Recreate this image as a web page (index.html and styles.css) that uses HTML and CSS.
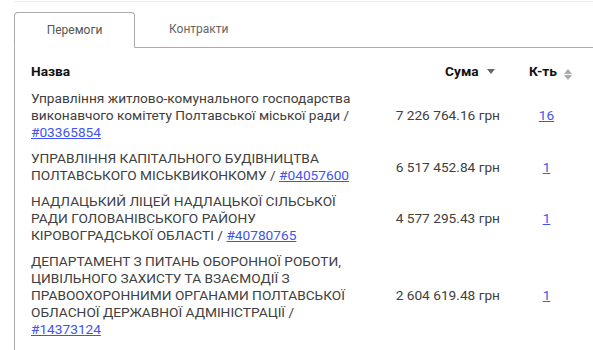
FILE: index.html
```html
<!DOCTYPE html>
<html lang="uk">
<head>
<meta charset="utf-8">
<link rel="stylesheet" href="styles.css">
</head>
<body>
<div class="top-line"></div>
<div class="tabs">
  <div class="tab active">Перемоги</div>
  <div class="tab">Контракти</div>
</div>
<div class="panel">
  <table class="grid">
    <colgroup>
      <col class="c-name"><col class="c-sum"><col class="c-cnt">
    </colgroup>
    <thead>
      <tr>
        <th class="h-name">Назва</th>
        <th class="h-sum">Сума <span class="arrow-down"></span></th>
        <th class="h-cnt">К-ть <span class="arrow-both"><span class="up"></span><span class="down"></span></span></th>
      </tr>
    </thead>
    <tbody>
      <tr>
        <td class="name">Управління житлово-комунального господарства виконавчого комітету Полтавської міської ради / <a href="#">#03365854</a></td>
        <td class="sum">7 226 764.16 грн</td>
        <td class="cnt"><a href="#">16</a></td>
      </tr>
      <tr>
        <td class="name">УПРАВЛІННЯ КАПІТАЛЬНОГО БУДІВНИЦТВА ПОЛТАВСЬКОГО МІСЬКВИКОНКОМУ / <a href="#">#04057600</a></td>
        <td class="sum">6 517 452.84 грн</td>
        <td class="cnt"><a href="#">1</a></td>
      </tr>
      <tr>
        <td class="name">НАДЛАЦЬКИЙ ЛІЦЕЙ НАДЛАЦЬКОЇ СІЛЬСЬКОЇ РАДИ ГОЛОВАНІВСЬКОГО РАЙОНУ КІРОВОГРАДСЬКОЇ ОБЛАСТІ / <a href="#">#40780765</a></td>
        <td class="sum">4 577 295.43 грн</td>
        <td class="cnt"><a href="#">1</a></td>
      </tr>
      <tr>
        <td class="name">ДЕПАРТАМЕНТ З ПИТАНЬ ОБОРОННОЇ РОБОТИ, ЦИВІЛЬНОГО ЗАХИСТУ ТА ВЗАЄМОДІЇ З ПРАВООХОРОННИМИ ОРГАНАМИ ПОЛТАВСЬКОЇ ОБЛАСНОЇ ДЕРЖАВНОЇ АДМІНІСТРАЦІЇ / <a href="#">#14373124</a></td>
        <td class="sum">2 604 619.48 грн</td>
        <td class="cnt"><a href="#">1</a></td>
      </tr>
    </tbody>
  </table>
</div>
</body>
</html>
```

FILE: styles.css
```css
html, body {
  margin: 0;
  padding: 0;
  background: #fff;
  font-family: Roboto, "Noto Sans", sans-serif;
  color: #404040;
}

.top-line {
  margin: 1px 0 0 14px;
  border-top: 1px solid #ececec;
}

.tabs {
  display: flex;
  margin: 10px 0 0 14px;
  border-bottom: 1px solid #ababab;
}

.tab {
  height: 34px;
  line-height: 34px;
  padding: 0 34px;
  font-size: 12px;
  color: #666;
  box-sizing: border-box;
}

.tab.active {
  width: 121px;
  height: 36px;
  padding: 0;
  text-align: center;
  color: #555;
  border: 1px solid #ababab;
  border-bottom: 1px solid #fff;
  border-radius: 4px 4px 0 0;
  margin-bottom: -1px;
  background: #fff;
  line-height: 34px;
}

.panel {
  margin-left: 14px;
  border-left: 1px solid #ababab;
  min-height: 320px;
  padding-left: 16px;
}

.grid {
  border-collapse: collapse;
  table-layout: fixed;
  width: 552px;
}

.c-name { width: 335px; }
.c-sum { width: 144px; }
.c-cnt { width: 73px; }

th {
  font-size: 13.7px;
  font-weight: bold;
  color: #111;
  line-height: 17px;
  padding: 15px 0 6px;
  white-space: nowrap;
}

.h-name { text-align: left; }
.h-sum { text-align: right; padding-right: 15px; }
.h-cnt { text-align: left; padding-left: 19px; }

.arrow-down {
  display: inline-block;
  width: 0;
  height: 0;
  border-left: 4.5px solid transparent;
  border-right: 4.5px solid transparent;
  border-top: 5px solid #666;
  margin-left: 5px;
  vertical-align: 2px;
}

.arrow-both {
  display: inline-flex;
  flex-direction: column;
  gap: 1px;
  margin-left: 4px;
  vertical-align: 2px;
}

.arrow-both .up,
.arrow-both .down {
  width: 0;
  height: 0;
  border-left: 4px solid transparent;
  border-right: 4px solid transparent;
}

.arrow-both .up { border-bottom: 5px solid #aaa; }
.arrow-both .down { border-top: 5px solid #aaa; }

td {
  font-size: 13.7px;
  line-height: 17px;
  padding: 4px 0 5px;
  vertical-align: middle;
}

td.sum {
  text-align: right;
  padding-right: 10px;
  white-space: nowrap;
}

td.cnt {
  text-align: center;
}

a {
  color: #4154f1;
  text-decoration: underline;
}
```
